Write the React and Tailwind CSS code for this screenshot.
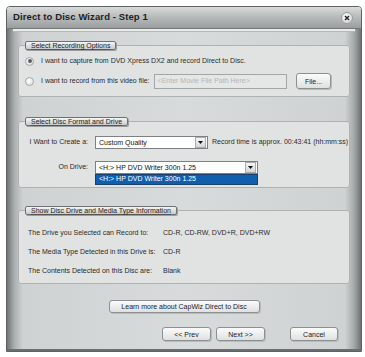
import React from 'react';

const font = { fontFamily: '"Liberation Sans", Arial, sans-serif' };

const Legend = ({ children }) => (
    <div className="relative z-10 ml-[7px] h-[9px] w-fit px-[5px] flex items-center rounded-[2px] border border-[#6e7272] bg-[linear-gradient(#f4f5f5,#c9cccc)] text-[7px] leading-none text-[#222] underline decoration-[#555] shadow-[1px_1px_0_#9a9e9e]">
        {children}
    </div>
);

const GroupBox = ({ title, className, boxClass, children }) => (
    <div className={className}>
        <Legend>{title}</Legend>
        <div className={`-mt-[5px] rounded-[3px] border border-[#aeb2b2] bg-[#e1e3e3] ${boxClass}`}>
            {children}
        </div>
    </div>
);

const Radio = ({ checked }) => (
    <div className="w-[9px] h-[9px] rounded-full border border-[#a4a8a8] bg-[radial-gradient(circle_at_40%_40%,#ffffff,#d6d8d8)] flex items-center justify-center">
        {checked && <div className="w-[4px] h-[4px] rounded-full bg-[#5a5e5e]" />}
    </div>
);

const Button = ({ children, className }) => (
    <button className={`flex items-center justify-center rounded-[3px] border border-[#8c9090] bg-[linear-gradient(#fbfbfb,#dfe1e1)] text-[7px] leading-none text-[#222] shadow-[1px_1px_0_#b8bcbc] ${className}`}>
        {children}
    </button>
);

const Combo = ({ value, className }) => (
    <div className={`flex items-center h-[13px] border border-[#7d8186] bg-white ${className}`}>
        <span className="flex-1 pl-[3px] text-[7px] leading-none text-[#111] whitespace-nowrap">{value}</span>
        <div className="w-[11px] h-[11px] mr-[1px] flex items-center justify-center border border-[#a8acac] bg-[linear-gradient(#f6f6f6,#d4d6d6)]">
            <svg width="5" height="3" viewBox="0 0 5 3"><path d="M0 0h5L2.5 3z" fill="#111" /></svg>
        </div>
    </div>
);

export default function App() {
    return (
        <div className="w-[365px] h-[357px] bg-white pt-[6px] pl-[6px]" style={font}>
            <div className="w-[356px] h-[346px] flex flex-col rounded-t-[4px] border border-[#5e6262] overflow-hidden">
                {/* Title bar */}
                <div className="h-[22px] flex items-center justify-between pl-[6px] pr-[8px] bg-[linear-gradient(#dadbdb,#b9bcbc_45%,#9a9e9e)] border-b border-[#737777]">
                    <span className="text-[9.5px] font-semibold text-[#1e1e1e] tracking-[0.1px]">Direct to Disc Wizard - Step 1</span>
                    <div className="w-[12px] h-[12px] rounded-full border border-[#9a9e9e] bg-[radial-gradient(circle_at_40%_35%,#ffffff,#c8cbcb)] flex items-center justify-center">
                        <svg width="6" height="6" viewBox="0 0 6 6"><path d="M1 1l4 4M5 1L1 5" stroke="#222" strokeWidth="1.4" /></svg>
                    </div>
                </div>

                {/* Body */}
                <div className="flex-1 flex flex-col bg-[linear-gradient(to_right,#6f7373,#a9adad_2%,#cfd2d2_4.5%,#d8dbdb_50%,#cfd2d2_95.5%,#a5a9a9_98%,#6f7373)] border-b-[2px] border-[#6a6e6e]">
                    <div className="h-[3px] bg-[#e9ebeb] border-b border-[#b4b8b8] mx-[6px]" />

                    <div className="px-[11px] flex flex-col">
                        {/* Recording options */}
                        <GroupBox title="Select Recording Options" className="mt-[9px]" boxClass="h-[52px] pt-[9px] pl-[6px] pr-[18px] flex flex-col gap-[6px]">
                            <div className="h-[12px] flex items-center gap-[7px] text-[7px] text-[#2a2a2a]">
                                <Radio checked />
                                <span>I want to capture from DVD Xpress DX2 and record Direct to Disc.</span>
                            </div>
                            <div className="h-[16px] flex items-center text-[7px] text-[#2a2a2a]">
                                <Radio />
                                <span className="ml-[7px]">I want to record from this video file:</span>
                                <div className="ml-[4px] w-[133px] h-[15px] border border-[#a2a6a6] bg-[#e5e6e6] flex items-center pl-[3px] text-[#b4b6b6]">
                                    &lt;Enter Movie File Path Here&gt;
                                </div>
                                <Button className="ml-auto w-[35px] h-[16px]">File...</Button>
                            </div>
                        </GroupBox>

                        {/* Disc format */}
                        <GroupBox title="Select Disc Format and Drive" className="mt-[20px]" boxClass="h-[67px] pt-[14px] flex flex-col text-[7px] text-[#2a2a2a]">
                            <div className="flex items-center h-[13px]">
                                <span className="w-[69px] text-right">I Want to Create a:</span>
                                <Combo value="Custom Quality" className="ml-[7px] w-[113px]" />
                                <span className="ml-[4px] whitespace-nowrap">Record time is approx. 00:43:41 (hh:mm:ss)</span>
                            </div>
                            <div className="flex items-center h-[13px] mt-[12px]">
                                <span className="w-[69px] text-right">On Drive:</span>
                                <Combo value="<H:>  HP DVD Writer 300n  1.25" className="ml-[7px] w-[163px]" />
                            </div>
                            <div className="ml-[76px] w-[163px] h-[11px] bg-[#0f5fae] border border-[#1a3f6a] flex items-center pl-[3px] text-white whitespace-nowrap">
                                &lt;H:&gt;  HP DVD Writer 300n  1.25
                            </div>
                        </GroupBox>

                        {/* Drive info */}
                        <GroupBox title="Show Disc Drive and Media Type Information" className="mt-[18px]" boxClass="h-[74px] pt-[16px] pl-[9px] flex flex-col gap-[7px] text-[7px] text-[#2a2a2a]">
                            {[
                                ['The Drive you Selected can Record to:', 'CD-R, CD-RW, DVD+R, DVD+RW'],
                                ['The Media Type Detected in this Drive is:', 'CD-R'],
                                ['The Contents Detected on this Disc are:', 'Blank'],
                            ].map(([label, value]) => (
                                <div key={label} className="flex items-center h-[12px]">
                                    <span className="w-[135px]">{label}</span>
                                    <span>{value}</span>
                                </div>
                            ))}
                        </GroupBox>

                        <Button className="mt-[16px] self-center w-[151px] h-[13px]">Learn more about CapWiz Direct to Disc</Button>

                        <div className="mt-[14px] flex items-center">
                            <Button className="ml-[144px] w-[49px] h-[14px]">&lt;&lt; Prev</Button>
                            <Button className="ml-[5px] w-[49px] h-[14px]">Next &gt;&gt;</Button>
                            <Button className="ml-[25px] w-[48px] h-[14px]">Cancel</Button>
                        </div>
                    </div>
                </div>
            </div>
        </div>
    );
}
